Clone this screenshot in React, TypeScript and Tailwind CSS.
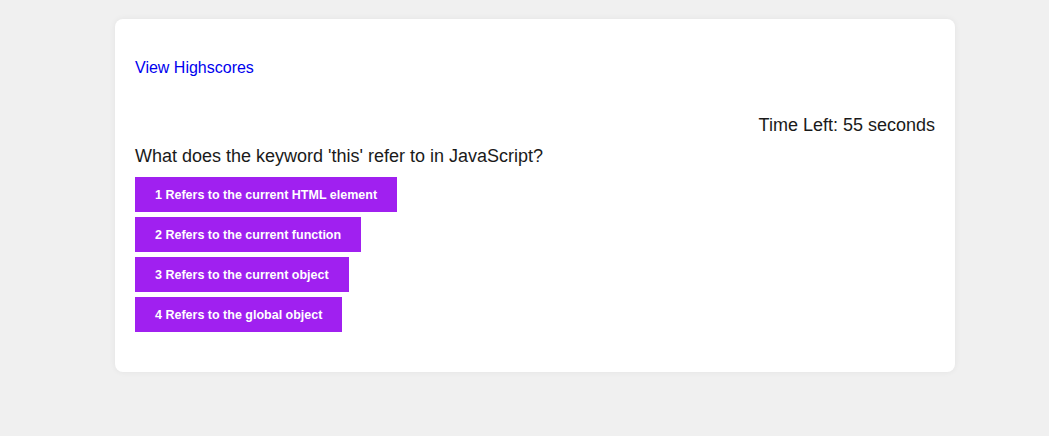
const choices = [
  "1 Refers to the current HTML element",
  "2 Refers to the current function",
  "3 Refers to the current object",
  "4 Refers to the global object",
];

export default function App() {
  return (
    <main className="min-h-screen bg-[#f0f0f0] pt-[19px] font-['Liberation_Sans',Arial,sans-serif] text-[#1a1a1a]">
      <div className="ml-[115px] w-[840px] rounded-lg bg-white px-5 pt-[40px] pb-[40px] shadow-[0_0_6px_rgba(0,0,0,0.06)]">
        <a href="#" className="block text-base leading-[18px] text-[#0000ee]">
          View Highscores
        </a>

        <p className="mt-[38px] text-right text-lg leading-[21px]">Time Left: 55 seconds</p>

        <h2 className="mt-[10px] text-lg leading-[21px]">What does the keyword 'this' refer to in JavaScript?</h2>

        <div className="mt-[10px] flex flex-col items-start gap-[5px]">
          {choices.map((c) => (
            <button
              key={c}
              className="h-[35px] bg-[#a020f0] px-5 pt-px text-[12.5px] font-bold text-white"
            >
              {c}
            </button>
          ))}
        </div>
      </div>
    </main>
  );
}
